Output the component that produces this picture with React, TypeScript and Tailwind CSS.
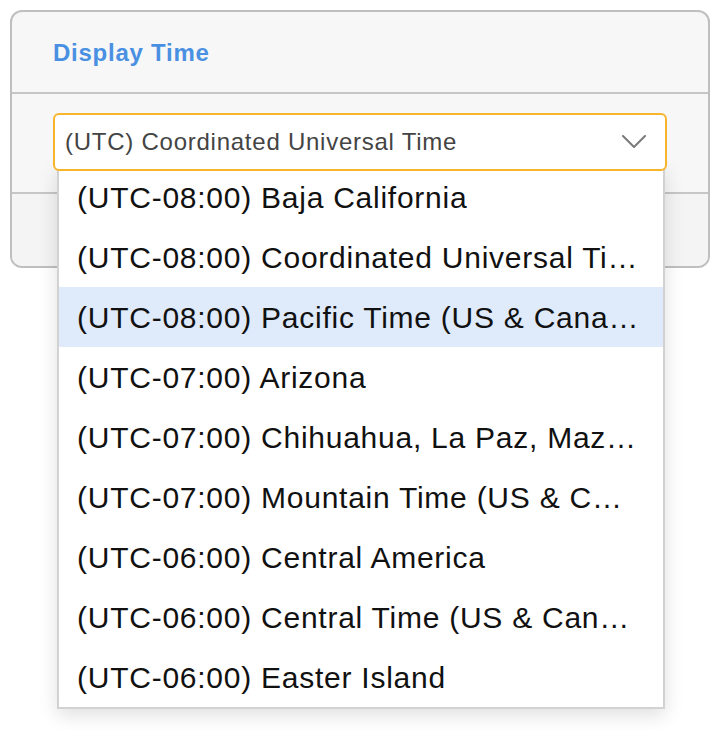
const zones = [
  "(UTC-08:00) Baja California",
  "(UTC-08:00) Coordinated Universal Time-08",
  "(UTC-08:00) Pacific Time (US & Canada)",
  "(UTC-07:00) Arizona",
  "(UTC-07:00) Chihuahua, La Paz, Mazatlan",
  "(UTC-07:00) Mountain Time (US & Canada)",
  "(UTC-06:00) Central America",
  "(UTC-06:00) Central Time (US & Canada)",
  "(UTC-06:00) Easter Island",
];

const Chevron = () => (
  <svg width="24" height="14" viewBox="0 0 24 14" fill="none">
    <polyline
      points="1,1 12,12 23,1"
      stroke="#7a7a7a"
      strokeWidth="2"
      strokeLinejoin="round"
      strokeLinecap="round"
    />
  </svg>
);

const App = () => {
  const selected = 2;

  return (
    <div
      className="min-h-[730px] bg-white p-[10px]"
      style={{ fontFamily: '"Liberation Sans", Arial, sans-serif' }}
    >
      <div className="w-[700px] rounded-[12px] border-2 border-[#bfbfbf] bg-[#f7f7f7]">
        {/* header */}
        <div className="flex h-[82px] items-center border-b-2 border-[#c6c6c6] px-[41px] pt-[2px]">
          <span className="text-[24px] font-bold tracking-[0.75px] text-[#4a90e2]">
            Display Time
          </span>
        </div>

        {/* body */}
        <div className="border-b-2 border-[#c6c6c6] px-[41px] pt-[19px] pb-[21px]">
          <div className="relative">
            <div className="relative z-10 flex h-[58px] items-center justify-between rounded-[6px] border-2 border-[#f6b52c] bg-white pl-[10px] pr-[19px]">
              <span className="text-[24px] tracking-[0.75px] text-[#444444]">
                (UTC) Coordinated Universal Time
              </span>
              <Chevron />
            </div>

            {/* open list */}
            <div className="absolute left-[4px] right-[2px] top-[52px] z-0 border-2 border-[#d2d2d2] bg-white shadow-[0_6px_18px_rgba(0,0,0,0.13)]">
              {zones.map((z, i) => (
                <div
                  key={z}
                  className={`flex h-[60px] items-center pl-[18px] pr-[24px] ${
                    i === selected ? "bg-[#dfeafa]" : "bg-white"
                  }`}
                >
                  <span className="truncate text-[30px] tracking-[0.75px] text-[#111111]">
                    {z}
                  </span>
                </div>
              ))}
            </div>
          </div>
        </div>

        {/* footer */}
        <div className="h-[72px] rounded-b-[10px] bg-[#f4f4f4]" />
      </div>
    </div>
  );
};

export default App;
